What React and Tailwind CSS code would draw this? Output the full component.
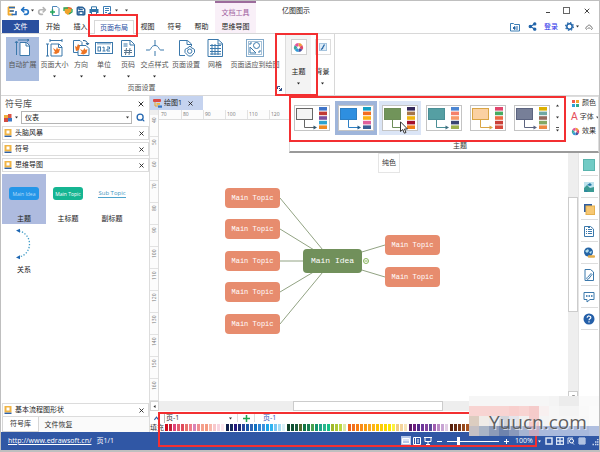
import { Redo2, Save, Search, Settings, Share2, Undo2, X } from 'lucide-react';

const tabs = [
  { label: '开始', width: 'w-7' },
  { label: '插入', width: 'w-[27px]' },
  { label: '页面布局', width: 'w-10', active: true },
  { label: '视图', width: 'w-[27px]' },
  { label: '符号', width: 'w-[27px]' },
  { label: '帮助', width: 'w-[27px]' },
];

const pageTools = [
  { label: '自动扩展', icon: ExpandIcon, width: 'w-[33px]', active: true },
  { label: '页面大小', icon: PageSizeIcon, width: 'w-[31px]', menu: true },
  { label: '方向', icon: OrientationIcon, width: 'w-[22px]', menu: true },
  { label: '单位', icon: UnitIcon, width: 'w-6', menu: true },
  { label: '页码', icon: PageNumberIcon, width: 'w-6', menu: true },
  { label: '交点样式', icon: CrossIcon, width: 'w-[29px]', menu: true },
  { label: '页面设置', icon: PageSetupIcon, width: 'w-[34px]' },
  { label: '网格', icon: GridIcon, width: 'w-6' },
  { label: '页面适应到绘图', icon: FitIcon, width: 'w-14' },
];

const themes = [
  { fill: '#f4f4f4', line: '#666666', arrow: '#33566b', bars: ['#3f74c8', '#c03a35', '#7a4fa0', '#2fa3d0', '#f08a24'] },
  { fill: '#2e8fe0', line: '#2d7fc4', arrow: '#1f5c8c', bars: ['#159fc4', '#f26d21', '#fbb215', '#e0609c', '#3a5e94'], selected: true },
  { fill: '#71945a', line: '#6d8d57', arrow: '#6d8d57', bars: ['#33285c', '#a5764b', '#f0b511', '#a30f2d', '#f0801a'], hover: true },
  { fill: '#559fa3', line: '#4a8f96', arrow: '#3f6f80', bars: ['#4c86d2', '#f5816b', '#f79a6b', '#3a4573', '#9db04d'] },
  { fill: '#fbd1a2', line: '#d9a545', arrow: '#d9a545', bars: ['#e0456c', '#4aab62', '#ef6a44', '#ca4038', '#d84b3c'] },
  { fill: '#777f98', line: '#5c6480', arrow: '#5c6480', bars: ['#dcb000', '#6fa8a2', '#94695c', '#84a862', '#ee8840'] },
];

const leftTopics = [
  'top-[68px]',
  'top-[99px]',
  'top-[131px]',
  'top-[162px]',
  'top-[194px]',
];

const swatches = [
  ['#d00f1f', '#c21f3a', '#e0447c', '#e25a6c', '#e04a5a', '#e8746c', '#f07c8c', '#d884b8', '#f08c90', '#f5a08c', '#f59a80', '#f8b8ac', '#f8c8cc', '#f8d4e0', '#fbe6ee'],
  ['#10204c', '#14285c', '#241a80', '#1c2c74', '#28489c', '#1858a8', '#2c64b4', '#1070c0', '#2c84d4', '#3c90dc', '#1ca4e8', '#30b4f0', '#78c8f4', '#a4dcf4', '#d8f0f8'],
  ['#0c4028', '#0c5030', '#1c5c3c', '#50682c', '#107444', '#187c50', '#48a04c', '#14946c', '#20a488', '#2cb48c', '#14c088', '#a0b828', '#acc838', '#bcd840', '#dce8a8'],
  ['#f06018', '#f07020', '#f87c10', '#f88c18', '#f89c10', '#f8a820', '#fcb418', '#fcc000', '#fccc08', '#fcd800', '#fce400', '#fcf040', '#f0cc80', '#f4d49c', '#f8e4b8'],
  ['#581868', '#6c1c80', '#502888', '#6c3498', '#8444a0', '#5c4898', '#a05cb0', '#b888c4', '#c8a4d4', '#e0cce4'],
  ['#58200c', '#682c14', '#7c3818', '#94481c', '#a85420', '#b86428', '#c87840', '#d49460'],
];

const mosaic = [
  '#f6f6f6 #f6f6f6 #f6f6f6 #f6f6f6 #f6f6f6 #f6f6f6 #f6f6f6 #f6f6f6 #f4f4f4 #ececec #ececec #fafafa #fafafa',
  '#f8d4d2 #f8d4d2 #f8d4d2 #f8d4d2 #f8cfcd #f8d4d2 #f5cbca #f8f0f0 #f6f6f6 #f4f4f4 #f4f4f4 #f9f9f9 #fbfbfb',
  '#dccdc0 #f0ece8 #e8e8ec #d2d4da #e4e4ea #f0f0f0 #f4cccc #f4f4f4 #f6f6f6 #f6f6f6 #f6f6f6 #f8f8f8 #fbfbfb',
  '#c5c0c4 #a9b4c6 #8d9bb8 #6f83ad #8a99bb #a6b4d2 #c4adc4 #a9b9dc #a9b9dc #a9b9dc #a9b9dc #a9b9dc #b0bfe0',
].map((row) => row.split(' '));

function Svg({ className, box = 18, children }) {
  return (
    <svg className={className} viewBox={`0 0 ${box} ${box}`} fill="none" stroke="#3b78ab" strokeWidth="1" aria-hidden="true">
      {children}
    </svg>
  );
}

function Caret({ className = 'text-[#333]' }) {
  return (
    <svg className={`w-[3px] h-[3px] shrink-0 ${className}`} viewBox="0 0 4 4" aria-hidden="true">
      <path d="M0 0.6h4L2 3.4z" fill="currentColor" />
    </svg>
  );
}

// Hand-drawn callout frame around a part of the window
function Mark({ className }) {
  return <div className={`absolute border-2 border-[#f32f31] pointer-events-none ${className}`} />;
}

function ExpandIcon() {
  return (
    <Svg className="size-[18px]">
      <path d="M6 3.5h6.5l3 3v10H6z" fill="#fff" />
      <path d="M12 3.5v3.5h3.5M4 1h11M2.5 3v13M1 4l1.5-2L4 4M13 0l2 1-2 1.500" />
    </Svg>
  );
}

function PageSizeIcon() {
  return (
    <Svg className="size-[18px]">
      <path d="M4 1.500h12M4 0v3M16 0v3M1.500 5v12M0 5h3M0 17h3" />
      <path d="M5 5h8l3 3v9H5z" fill="#fff" />
      <path d="M12.500 5v3.500H16" />
      <path d="M7 9l3 2 1-3 1 2.500 2-1-1 4-3 1.500-3-1 2-1z" fill="#ed7423" stroke="none" />
    </Svg>
  );
}

function OrientationIcon() {
  return (
    <Svg className="size-[18px]">
      <path d="M1.500 1.500H8l2 2v10H1.500z" fill="#fff" />
      <path d="M6 6.500h8l3 3v7H6z" fill="#fff" />
      <path d="M11 1.500c3 0 4.500 1 4.500 4M14 4l1.500 2L17 4" stroke="#1d5c93" />
      <path d="M3 7l2 1 1-3 2 2-1 4-3 1zM8 10l3 1.500L12.500 9l1 2 2-1-1 4-3 1.500-3-1 1.500-1.500z" fill="#ed7423" stroke="none" />
    </Svg>
  );
}

function UnitIcon() {
  return (
    <Svg className="size-[18px]">
      <rect x="0.500" y="3.500" width="17" height="11" fill="#fff" />
      <path d="M3 4v1.500M5 4v1.500M7 4v1.500M9 4v1.500M11 4v1.500M13 4v1.500M15 4v1.500" />
      <rect x="3" y="8" width="2.500" height="4" />
      <path d="M7.500 8.500L9 8v4M7.500 12h3M12 8h2.500v2H12v2h3" />
    </Svg>
  );
}

function PageNumberIcon() {
  return (
    <Svg className="size-[18px]">
      <path d="M2.500 1.500h9l4 4v12h-13z" fill="#fff" />
      <path d="M11 1.500V6h4.500M4.500 5h4M4.500 7h4" />
      <path d="M7.500 9l-1 7M11 9l-1 7M5 11.500h8M5 13.500h8" stroke="#5c7890" />
    </Svg>
  );
}

function CrossIcon() {
  return (
    <Svg className="size-[18px]">
      <path d="M9 1v6M9 12v5M0 11h3.500C5 11 5 6.500 9 6.500S13 11 14.500 11H18" />
    </Svg>
  );
}

function PageSetupIcon() {
  return (
    <Svg className="size-[18px]">
      <path d="M14.500 7V5l-4-3.500h-8v15H8M10 1.500V5.500h4.500" />
      <path d="M12 7.500h2l.5 1.500 1.500.500 1.500 1v3l-1.500 1.500-1.500 2h-3L9.500 15 8 13.500v-3L9.500 9.500 11 9z" />
      <circle cx="12.700" cy="12.200" r="2.200" />
    </Svg>
  );
}

function GridIcon() {
  return (
    <Svg className="size-[18px]">
      <path d="M2 0.500h10l4.500 4V17.500H2z" fill="#fff" />
      <path d="M12 .5V5h4.500M4 6.500h11M4 9.500h11M4 12.500h11M4 15h11M6 5v11M9 5v11M12 5.500V16" />
    </Svg>
  );
}

function FitIcon() {
  return (
    <Svg className="size-[18px]">
      <rect x="0.500" y="0.500" width="17" height="17" stroke="#82a9c9" />
      <rect x="2.500" y="2.500" width="13" height="13" stroke="#a5c1d8" />
      <circle cx="10.500" cy="6.500" r="3" />
      <path d="M4 8v6h6zM12 13h2v-2M4 4h2M4 4v2" />
    </Svg>
  );
}

function PaletteIcon({ className }) {
  return (
    <Svg className={className} box={12}>
      <g stroke="none">
        <path d="M6 6V1a5 5 0 0 1 4.300 2.500z" fill="#f29b38" />
        <path d="M6 6l4.300-2.500a5 5 0 0 1 0 5z" fill="#e0486a" />
        <path d="M6 6l4.300 2.500A5 5 0 0 1 6 11z" fill="#4a4f9e" />
        <path d="M6 6v5a5 5 0 0 1-4.300-2.500z" fill="#2f9bd8" />
        <path d="M6 6L1.700 8.500a5 5 0 0 1 0-5z" fill="#3aa6a0" />
        <path d="M6 6L1.700 3.500A5 5 0 0 1 6 1z" fill="#e2559a" />
        <circle cx="6" cy="6" r="1.500" fill="#fff" />
      </g>
    </Svg>
  );
}

function BookIcon() {
  return (
    <Svg className="size-2 shrink-0" box={8}>
      <rect x="0.500" y="0" width="7" height="6.500" fill="#f0b445" stroke="none" />
      <rect x="2.500" y="1.500" width="3" height="3" fill="#fff" stroke="none" />
      <path d="M0.500 7.300h7" stroke="#2f62a8" strokeWidth="1.400" />
    </Svg>
  );
}

function FlowIcon() {
  return (
    <Svg className="size-[9px] shrink-0" box={9}>
      <rect x="0" y="0" width="8" height="3" rx="1" fill="#dd4a45" stroke="none" />
      <path d="M2 3v4h3" stroke="#e8a32e" />
      <rect x="3.500" y="4" width="3.500" height="1.800" fill="#f0b63d" stroke="none" />
      <rect x="5" y="6.500" width="4" height="2.200" fill="#3575c4" stroke="none" />
    </Svg>
  );
}

function TitleBar() {
  return (
    <header className="flex h-[19px] text-[#333]">
      <div className="flex w-[214px] items-center gap-[3px] pl-1.5">
        <Svg className="size-2.5" box={10}>
          <path d="M1 1.500h7M1 5h5M1 8.500h5M1.500 1v8" stroke="#f0a92e" strokeWidth="1.800" />
          <path d="M2 1.500h6M3 5h4M4.500 8.500H9V5" stroke="#2d6cb5" strokeWidth="1.600" />
        </Svg>
        <div className="flex items-center">
          <Undo2 className="size-2.5 text-[#2273c4]" strokeWidth={4} />
          <Caret className="ml-px text-[#333]" />
        </div>
        <Redo2 className="size-2.5 text-[#b5b5b5]" strokeWidth={4} />
        <Svg className="size-2.5" box={10}>
          <path d="M2.500.5H7L9 2.500v7H2.500z" fill="#fff" stroke="#4d86b8" />
          <path d="M0 6h5M2.500 3.500v5" stroke="#21a45b" strokeWidth="1.600" />
        </Svg>
        <Svg className="size-2.5" box={10}>
          <path d="M1 2l4-1 4 1-1 5-3 2-3-2z" fill="#efa32a" stroke="none" />
          <path d="M1 5V2h4M9 3v3L6 8" stroke="#2ba35b" strokeWidth="1.300" />
          <path d="M5 1.500l3.500 1" stroke="#d8503f" strokeWidth="1.300" />
        </Svg>
        <Save className="size-2.5 text-[#2a6299]" strokeWidth={3.5} />
        <Svg className="size-2.5" box={10}>
          <path d="M2.500 3V.8h5V3" stroke="#2f74a8" />
          <rect x="0.500" y="3" width="9" height="4" fill="#2f74a8" stroke="none" />
          <path d="M2.500 5.500h5v3.700h-5z" fill="#fff" stroke="#2f74a8" />
        </Svg>
        <Svg className="size-2.5" box={10}>
          <path d="M1.500.5h7v5M1.500.5v9H5M3 2.500h4M3 4.500h4M3 6.500h2" stroke="#3d7eb5" />
          <path d="M5.500 7.500L9 9.500V6z" fill="#2063a5" stroke="none" />
        </Svg>
        <Caret />
        <Caret className="ml-1 text-[#333]" />
      </div>
      <div className="flex w-[41px] items-center justify-center border-t-2 border-[#9c6c9c] bg-[#f9f0f8] pt-0.5 text-[#a05f9e]">文档工具</div>
      <h1 className="w-20 pt-[5px] text-center text-[#222]">亿图图示</h1>
      <div className="ml-auto flex items-center gap-[13px] pr-2 text-[#444]">
        <button type="button" aria-label="最小化" className="flex size-2 items-center"><span className="mt-1 ml-1 h-px w-1 bg-[#444]" /></button>
        <button type="button" aria-label="最大化" className="size-[7px] border border-[#666]" />
        <button type="button" aria-label="关闭"><X className="size-2" strokeWidth={3} /></button>
      </div>
    </header>
  );
}

function TabRow() {
  return (
    <nav className="flex h-[14px] items-stretch border-b border-[#d8d8d8] text-[#222]">
      <button type="button" className="ml-px w-[37px] bg-[#2a4f9f] text-white">文件</button>
      {tabs.map((tab) => (
        <div key={tab.label} className={`relative flex ${tab.width}`}>
          <button type="button" className={tab.active ? '-mb-px flex-1 border border-b-0 border-[#d8d8d8] bg-white text-[#2a4f9f]' : 'flex-1'}>
            {tab.label}
          </button>
          {tab.active && <Mark className="-left-[6px] -right-1 -top-[6px] -bottom-1 z-10" />}
        </div>
      ))}
      <button type="button" className="w-[41px] bg-[#f9f0f8]">思维导图</button>
      <div className="ml-auto flex items-center gap-1.5 pr-1.5 text-[#1e62a8]">
        <Svg className="size-2.5" box={10}>
          <path d="M.5 1.500h3l1 1h5v6.500h-9z" stroke="#3d7eb5" />
          <path d="M3 6l2-1.500V7.500zM7 4v4" fill="#2063a5" stroke="#2063a5" />
        </Svg>
        <Share2 className="ml-0.5 size-[9px] fill-current" strokeWidth={3} />
        <a href="#login" className="px-px text-[#1c2be8]">登录</a>
        <Svg className="size-[9px]" box={9}>
          <circle cx="4.500" cy="4.500" r="2.700" stroke="#1e62a8" strokeWidth="1.500" />
          <circle cx="4.500" cy="4.500" r="3.900" stroke="#1e62a8" strokeWidth="1.100" strokeDasharray="1.500 1.560" />
        </Svg>
        <Caret className="-ml-1 text-[#333]" />
        <Svg className="size-2" box={8}>
          <path d="M2 6.500C0 6 .5 4 2 4c.5-2.500 4-2.500 4 0 1.700 0 2 2.500 0 2.500M2.500 6L4 4.500 5.500 6" stroke="#777" />
        </Svg>
      </div>
    </nav>
  );
}

function Ribbon() {
  return (
    <section className="flex h-[62px] border-b border-[#d8d8d8] text-[#555]">
      <div className="relative flex w-[284px] shrink-0 flex-col pt-[3px] pl-[5px]">
        <div className="flex h-[44px]">
          {pageTools.map((tool) => (
            <button
              key={tool.label}
              type="button"
              className={`flex shrink-0 flex-col items-center whitespace-nowrap pt-[2px] ${tool.width} ${tool.active ? 'bg-[#a9bcdf]' : ''}`}
            >
              <tool.icon />
              <span className="mt-[3px]">{tool.label}</span>
              {tool.menu && <Caret className="mt-[5px] text-[#222]" />}
            </button>
          ))}
        </div>
        <div className="pt-0.5 pr-2 text-center">页面设置</div>
        <button type="button" aria-label="页面设置" className="absolute right-[3px] bottom-[4px]">
          <Svg className="size-[5px]" box={5}>
            <path d="M.5 3V.5H3M2 2l2.500 2.500M4.500 2v2.500H2" stroke="#2f4f86" />
          </Svg>
        </button>
      </div>
      <div className="relative flex w-[26px] flex-col items-center border-l border-[#ddd] bg-[#f3f3f3] pt-[5px] text-[#222]">
        <button type="button" className="flex flex-col items-center">
          <span className="flex size-4 items-center justify-center border border-[#d0d0d0] bg-white"><PaletteIcon className="size-[11px]" /></span>
          <span className="mt-3">主题</span>
          <Caret className="mt-[5px] text-[#222]" />
        </button>
        <Mark className="-inset-y-px -left-[11px] z-10 w-[43px]" />
      </div>
      <div className="flex w-6 flex-col items-center border-r border-[#d8d8d8] pt-[5px] text-[#222]">
        <button type="button" className="flex flex-col items-center">
          <span className="flex size-4 items-center justify-center border border-[#ddd] bg-white">
            <Svg className="size-2" box={8}>
              <rect x="0.500" y="0.500" width="7" height="7" fill="#dcebf7" stroke="#a5c4de" />
              <path d="M5.500 1.500L3.500 5M2 6.500L4 5" stroke="#2567a8" strokeWidth="1.300" />
            </Svg>
          </span>
          <span className="mt-3">背景</span>
          <Caret className="mt-[5px] text-[#222]" />
        </button>
      </div>
    </section>
  );
}

function LibraryRow({ name }) {
  return (
    <div className="flex h-[14px] items-center gap-[3px] border border-[#dcdcdc] bg-white px-px text-[#222]">
      <BookIcon />
      <span className="flex-1">{name}</span>
      <button type="button" aria-label={`关闭${name}`} className="pr-0.5"><X className="size-[7px]" strokeWidth={3} /></button>
    </div>
  );
}

function SymbolPanel() {
  return (
    <aside className="flex w-[147px] shrink-0 flex-col">
      <div className="flex h-[15px] items-center justify-between pr-1 pl-[3px] pt-px">
        <h2 className="text-[9px] text-[#555]">符号库</h2>
        <button type="button" aria-label="关闭符号库"><X className="size-2" strokeWidth={3} /></button>
      </div>
      <div className="flex h-[13px] items-center pl-0.5">
        <Svg className="size-2" box={8}>
          <path d="M0 1h4v3H0z" fill="#efae3b" stroke="none" />
          <path d="M4 0h3.500v4H4z" fill="#dc5447" stroke="none" />
          <path d="M0 4h4v4H0z" fill="#d14b43" stroke="none" />
          <path d="M4 4h4v3.500H4z" fill="#3c78c3" stroke="none" />
        </Svg>
        <Caret className="mx-[3px] text-[#333]" />
        <label className="relative flex h-[13px] w-[111px] items-center">
          <select aria-label="符号库搜索" className="h-full w-full appearance-none border border-[#b5b5b5] bg-white pl-[3px] text-[#222]">
            <option>仪表</option>
          </select>
          <span className="absolute right-[3px] flex"><Caret /></span>
        </label>
        <button type="button" aria-label="搜索" className="ml-1"><Search className="size-[9px] text-[#2567b0]" strokeWidth={3.5} /></button>
      </div>
      <div className="flex flex-col gap-0.5 pt-0.5">
        <LibraryRow name="头脑风暴" />
        <LibraryRow name="符号" />
        <LibraryRow name="思维导图" />
      </div>
      <div className="grid flex-1 grid-cols-3 content-start pt-0.5 pr-[15px] text-center text-[#222]">
        <div className="flex h-[50px] flex-col items-center justify-between bg-[#aebbdf] pt-[13px]">
          <span className="flex h-[13px] w-[30px] items-center justify-center rounded-[3px] bg-[#2496e8] text-[5px] text-[#b8dcf8]">Main Idea</span>
          <span>主题</span>
        </div>
        <div className="flex h-[50px] flex-col items-center justify-between pt-[13px]">
          <span className="flex h-[13px] w-[30px] items-center justify-center rounded-[3px] bg-[#15b592] text-[5px] text-white">Main Topic</span>
          <span>主标题</span>
        </div>
        <div className="flex h-[50px] flex-col items-center justify-between pt-[13px]">
          <span className="mt-0.5 border-b border-[#4fa3cc] text-[6px] leading-[8px] text-[#3f95c0]">Sub Topic</span>
          <span>副标题</span>
        </div>
        <div className="flex h-[51px] flex-col items-center justify-between pt-1">
          <svg className="h-8 w-[18px]" viewBox="0 0 18 32" fill="none" aria-hidden="true">
            <path d="M4 3C18 6 18 26 4 29" stroke="#3d9ac6" strokeWidth="1.300" strokeDasharray="1.300 1.700" />
            <path d="M1 2.500L5 .8v4zM1 29.500l4-2.300v4z" fill="#1d66b2" />
          </svg>
          <span>关系</span>
        </div>
      </div>
      <LibraryRow name="基本流程图形状" />
      <div className="flex h-[15px] items-stretch bg-[#fafafa]">
        <button type="button" className="w-[37px] border border-t-0 border-[#d5d5d5] bg-white">符号库</button>
        <button type="button" className="w-[39px]">文件恢复</button>
      </div>
    </aside>
  );
}

function Topic({ className }) {
  return (
    <div className={`absolute flex h-5 w-[55px] items-center justify-center rounded-[4px] bg-[#e78c6e] font-['Liberation_Mono','Noto_Sans_CJK_SC',monospace] text-white ${className}`}>
      Main Topic
    </div>
  );
}

function Canvas() {
  return (
    <div className="relative min-h-[281px] flex-1 overflow-hidden bg-white">
      <svg className="absolute top-0 left-0 h-[281px] w-[400px]" viewBox="0 0 400 281" stroke="#92a383" aria-hidden="true">
        <path d="M121 78L173 141M121 109L173 141M121 141H173M121 172L173 141M121 204L173 141M173 141L226 125M173 141L226 157" fill="none" />
        <circle cx="207" cy="141" r="2.500" fill="#fff" stroke="#88b45c" />
        <path d="M205.500 141h3" stroke="#88b45c" />
      </svg>
      {leftTopics.map((top) => (
        <Topic key={top} className={`left-[66px] ${top}`} />
      ))}
      <div className="absolute top-[129px] left-[144px] flex h-6 w-[59px] items-center justify-center rounded-[4px] bg-[#71905b] font-['Liberation_Mono','Noto_Sans_CJK_SC',monospace] text-[8px] text-white">
        Main Idea
      </div>
      <Topic className="top-[115px] left-[226px]" />
      <Topic className="top-[147px] left-[226px]" />
    </div>
  );
}

function Workspace() {
  return (
    <main className="flex min-w-0 flex-1 flex-col border-l border-[#ddd]">
      <div className="flex h-[14px] bg-white">
        <button type="button" className="flex w-[53px] items-center gap-0.5 bg-[#c5d3ef] pl-[3px] text-[#222]">
          <FlowIcon />
          <span>绘图1</span>
          <X className="ml-[3px] size-[7px]" strokeWidth={3} />
        </button>
      </div>
      <div className="flex flex-1">
        <div className="w-[9px] shrink-0 overflow-hidden border-r border-[#ddd] bg-[#fcfcfc] text-[5px] text-[#777]">
          <div className="h-[5px] bg-[#eee]" />
          {[40, 50, 60, 70, 80, 90, 100, 110, 120, 130, 140, 150, 160].map((n) => (
            <div key={n} className="flex h-[22px] rotate-180 items-center justify-end border-t border-[#e2e2e2] pb-0.5 leading-[8px] [writing-mode:vertical-rl]">{n}</div>
          ))}
        </div>
        <div className="flex min-w-0 flex-1 flex-col">
          <div className="flex h-2.5 overflow-hidden border-b border-[#ddd] bg-[#fcfcfc] pl-px text-[5px] leading-[8px] text-[#777]">
            {[70, 80, 90, 100, 110, 120, 130, 140, 150, 160, 170, 180, 190, 200, 210, 220, 230, 240].map((n) => (
              <div key={n} className="w-[22px] shrink-0 border-r border-[#e2e2e2] pl-px">{n}</div>
            ))}
          </div>
          <Canvas />
        </div>
        <div className="flex w-2.5 flex-col bg-[#eee]">
          <div className="mt-[87px] h-[115px] border border-[#ccc] bg-white" />
          <button type="button" aria-label="向下滚动" className="mt-auto flex h-2.5 items-center justify-center border border-[#ccc] bg-white"><Caret /></button>
        </div>
      </div>
      <div className="flex h-2.5 bg-[#eee]">
        <button type="button" aria-label="向左滚动" className="flex w-[9px] items-center justify-center border border-[#d5d5d5] bg-white"><span className="rotate-90"><Caret /></span></button>
        <div className="ml-[134px] w-[150px] border border-[#ccc] bg-white" />
      </div>
      <div className="relative">
        <div className="flex h-3 items-center pt-0.5 text-[#333]">
          <Svg className="ml-[3px] h-[5px] w-[7px]" box={7}>
            <path d="M.5 5.500l3-4 3 4" stroke="#2a5ba5" strokeWidth="1.500" />
          </Svg>
          <label className="relative ml-1 flex h-full w-[70px] items-center">
            <select aria-label="页面" className="h-2.5 w-full appearance-none border-l border-[#bbb] bg-white pl-px">
              <option>页-1</option>
            </select>
            <span className="absolute right-0.5 flex"><Caret /></span>
          </label>
          <button type="button" aria-label="新建页面" className="ml-[3px] flex h-2 w-[18px] items-center justify-center border-x border-[#ddd]">
            <Svg className="size-[7px]" box={7}><path d="M3.500 0v7M0 3.500h7" stroke="#20a34f" strokeWidth="1.500" /></Svg>
          </button>
          <button type="button" className="ml-2 text-[#3155b5]">页-1</button>
        </div>
        <div className="flex h-[9px] items-center gap-px text-[#333]">
          <span className="w-[14px] shrink-0">填充</span>
          {swatches.map((group) => (
            <div key={group[0]} className="flex gap-px pr-px">
              {group.map((color) => (
                <button key={color} type="button" aria-label={color} className="h-[7px] w-[3px]" style={{ backgroundColor: color }} />
              ))}
            </div>
          ))}
        </div>
        <Mark className="top-px -bottom-[15px] left-2 z-10 w-[379px]" />
      </div>
    </main>
  );
}

function SideBar() {
  return (
    <aside className="flex w-[21px] flex-col items-center border-l border-[#e5e5e5] bg-white pt-[58px]">
      {sideIcons.map((drawing, i) => (
        <button key={i} type="button" aria-label={`面板${i + 1}`} className="flex h-[22px] w-[17px] items-center justify-center border-b border-[#ddd]">
          <Svg className="size-3" box={12}>{drawing}</Svg>
        </button>
      ))}
    </aside>
  );
}

const sideIcons = [
  <rect x="0.500" y="0.500" width="11" height="11" fill="#72cbc5" stroke="#59b4ad" />,
  <>
    <rect x="1" y="1" width="10" height="10" fill="#bfe3ee" stroke="none" />
    <path d="M1 11V7l3-3 3 3 4-1v5z" fill="#3b9b94" stroke="none" />
    <path d="M4 4l3-2 2 2-2 1M1 9l4 1-2 1z" fill="#247aa8" stroke="none" />
  </>,
  <>
    <rect x="1" y="1" width="8" height="8" fill="#2e5d9f" stroke="none" />
    <rect x="3" y="3" width="8.500" height="8.500" fill="#f7c873" stroke="#e5b04e" />
  </>,
  <>
    <path d="M1.500 1.500h6l3 2.500v7.500h-9z" fill="#fff" />
    <path d="M3 4.500h1M3 6.500h1M3 8.500h1M5 4.500h4M5 6.500h4M5 8.500h4M5 2.500h2" />
  </>,
  <>
    <circle cx="5.500" cy="5" r="4.500" fill="#2564a5" stroke="none" />
    <path d="M2 4l3-2 1 2-2 2zM6 5l3-1-1 3z" fill="#b5e0ef" stroke="none" />
    <path d="M6 9.500h2M9 9.500h2" stroke="#e4ad4c" strokeWidth="2.500" strokeLinecap="round" />
  </>,
  <>
    <path d="M2 .500h5.500l3 2.500v8.500H2z" fill="#fff" />
    <path d="M4.500 8.500l3.500-4 1 1-3.500 4.500c-1 1-2.500 0-1.500-1.500" />
  </>,
  <>
    <path d="M1 1.500h10v7H7l-3 2.500V8.500H1z" fill="#fff" />
    <path d="M3 5h1.500M5.500 5H7M8 5h1.500" stroke="#246aa8" strokeWidth="1.300" />
  </>,
  <>
    <circle cx="6" cy="6" r="5.500" fill="#245fa8" stroke="none" />
    <path d="M4.200 4.700C4.200 2.300 8 2.500 7.800 4.700 7.700 5.800 6 5.900 6 7.300M6 8.300v1.300" stroke="#fff" strokeWidth="1.200" />
  </>,
];

function ThemeThumb({ theme }) {
  return (
    <svg className="h-[26px] w-9 border border-[#c4c4c4] bg-white" viewBox="0 0 34 24" fill="none" aria-hidden="true">
      <rect x="1.500" y="2.500" width="16" height="11" fill={theme.fill} stroke={theme.line} />
      <path d="M9.500 13.500V21.500H21" stroke={theme.line} />
      <path d="M18.500 19.500l3.500 2-3.500 2z" fill={theme.arrow} />
      {theme.bars.map((color, i) => (
        <rect key={i} x="24" y={1 + i * 4.600} width="8" height="3.600" fill={color} />
      ))}
    </svg>
  );
}

function ThemeMenu() {
  return (
    <div className="absolute top-0 right-0 left-[288px] z-20 h-[57px] border border-[#ddd] border-b-2 border-b-[#9a9a9a] bg-white">
      <div className="flex">
        <div className="relative flex h-[45px] w-[276px] shrink-0 items-center gap-0.5 pb-[3px] pl-px">
          {themes.map((theme) => (
            <button
              key={theme.fill}
              type="button"
              aria-label="主题"
              className={`flex h-[34px] w-[42px] shrink-0 items-center justify-center ${theme.selected ? 'bg-[#9fb5da]' : ''} ${theme.hover ? 'bg-[#dbe5f6]' : ''}`}
            >
              <ThemeThumb theme={theme} />
            </button>
          ))}
          <div className="flex h-7 flex-col items-center justify-between pl-px text-[#444]">
            <span className="rotate-180"><Caret /></span>
            <Caret />
            <span className="border-t border-[#555] pt-px"><Caret /></span>
          </div>
          <Mark className="-top-px right-0 bottom-0 -left-px" />
        </div>
        <div className="flex flex-1 flex-col gap-1 overflow-hidden pt-px pl-[5px] whitespace-nowrap text-[#333]">
          <button type="button" className="flex items-center gap-0.5">
            <Svg className="size-[9px] shrink-0" box={9}>
              <g stroke="none">
                <path d="M1 1h3v3H1z" fill="#ee5b4f" />
                <path d="M5 1h3v3H5z" fill="#f2a42c" />
                <path d="M1 5h3v3H1z" fill="#2d9ed8" />
                <path d="M5 5h3v3H5z" fill="#2fab8c" />
              </g>
            </Svg>
            颜色
            <Caret className="text-[#555]" />
          </button>
          <button type="button" className="flex items-center gap-0.5">
            <span className="w-[9px] font-['Liberation_Sans',sans-serif] text-[10px] text-[#e5505c]">A</span>
            字体
            <Caret className="text-[#555]" />
          </button>
          <button type="button" className="flex items-center gap-0.5">
            <PaletteIcon className="size-[9px] shrink-0" />
            效果
            <Caret className="text-[#555]" />
          </button>
        </div>
      </div>
      <div className="absolute bottom-0 left-[163px] text-[#333]">主题</div>
      <div className="absolute top-[56px] left-[88px] border border-[#e5e5e5] bg-white px-[3px] py-1 text-[#333]">纯色</div>
      <svg className="absolute top-[24px] left-[110px] h-[13px] w-2" viewBox="0 0 8 13" aria-hidden="true">
        <path d="M.5.800v9.700l2.300-2 1.500 3.700 1.700-.7-1.500-3.500h3z" fill="#fff" stroke="#333" />
      </svg>
    </div>
  );
}

function StatusBar() {
  return (
    <footer className="flex h-[18px] items-center bg-[#3057a5] pl-[7px] text-white">
      <a href="http://www.edrawsoft.cn/" className="underline">http://www.edrawsoft.cn/</a>
      <span className="ml-[5px]">页1/1</span>
      <div className="ml-auto flex items-center">
        <button type="button" aria-label="普通视图" className="flex size-2.5 items-center justify-center bg-[#b5c8e8]">
          <Svg className="size-2" box={8}><path d="M.5 1.500h7v5h-7zM.5 3h7" stroke="#fff" /></Svg>
        </button>
        <button type="button" aria-label="页面视图" className="ml-0.5">
          <Svg className="size-2" box={8}><path d="M.5.500h7v7h-7zM2.500 1v6M4 3h2M4 5h2" stroke="#fff" /></Svg>
        </button>
        <button type="button" aria-label="演示" className="ml-[3px]">
          <Svg className="size-2" box={8}><path d="M0 .500h8M1 1v3.500h6V1M4 4.500v3M2 7.500h4" stroke="#fff" /></Svg>
        </button>
        <button type="button" aria-label="缩小" className="ml-1"><Svg className="size-[7px]" box={7}><path d="M1 3.500h5" stroke="#fff" /></Svg></button>
        <input
          type="range"
          aria-label="缩放"
          defaultValue="20"
          className="mx-1 h-2 w-[52px] appearance-none bg-transparent bg-[linear-gradient(#fff,#fff)] bg-[length:100%_1px] bg-center bg-no-repeat [&::-webkit-slider-thumb]:h-2 [&::-webkit-slider-thumb]:w-[3px] [&::-webkit-slider-thumb]:appearance-none [&::-webkit-slider-thumb]:bg-white"
        />
        <button type="button" aria-label="放大"><Svg className="size-[7px]" box={7}><path d="M1 3.500h5M3.500 1v5" stroke="#fff" /></Svg></button>
        <span className="ml-[5px] w-[19px]">100%</span>
        <Caret className="ml-1 text-white" />
        <div className="ml-1 flex gap-[3px]">
          <Svg className="size-2" box={8}><path d="M1 1h6v6H1z" stroke="#dbe6f6" strokeWidth="1.500" /></Svg>
          <Svg className="size-2" box={8}><path d="M.5.500h7v7h-7zM4 1v6M1 4h6" stroke="#dbe6f6" strokeWidth="1.300" /></Svg>
          <Svg className="size-2" box={8}><path d="M1 7V1h5M7 7.500L5 5.500" stroke="#dbe6f6" /><circle cx="4.500" cy="4" r="2" stroke="#fff" /></Svg>
          <Svg className="size-2" box={8}><path d="M1 1h6v6H1zM3 1v6M5 1v6M1 3h6M1 5h6" stroke="#dbe6f6" /></Svg>
        </div>
        <Svg className="ml-1.5 size-[7px] self-end" box={7}>
          <path d="M5 .500h1.500M3 3h1.500M5 3h1.500M.5 5.500H2M3 5.500h1.500M5 5.500h1.500" stroke="#c9d7ef" strokeWidth="1.400" />
        </Svg>
      </div>
    </footer>
  );
}

function SiteBadge() {
  return (
    <div className="pointer-events-none absolute right-0 bottom-3.5 z-30 grid h-10 w-[130px] grid-cols-13 grid-rows-4">
      {mosaic.flat().map((color, i) => (
        <span key={i} style={{ backgroundColor: color }} />
      ))}
      <strong className="absolute top-3 left-5 font-['Open_Sans',sans-serif] text-[19px] leading-7 font-medium text-[#5f5f5f] [text-shadow:1px_1px_0_#ffffffaa]">Yuucn.com</strong>
    </div>
  );
}

export default function App() {
  return (
    <div className="relative flex min-h-screen flex-col border-t border-r border-b-2 border-l border-[#bfbfbf] bg-white font-['Open_Sans','Noto_Sans_CJK_SC',sans-serif] text-[7px] leading-[10px] text-[#333]">
      <TitleBar />
      <TabRow />
      <Ribbon />
      <div className="relative flex flex-1 pl-px">
        <SymbolPanel />
        <Workspace />
        <SideBar />
        <ThemeMenu />
      </div>
      <StatusBar />
      <SiteBadge />
    </div>
  );
}
